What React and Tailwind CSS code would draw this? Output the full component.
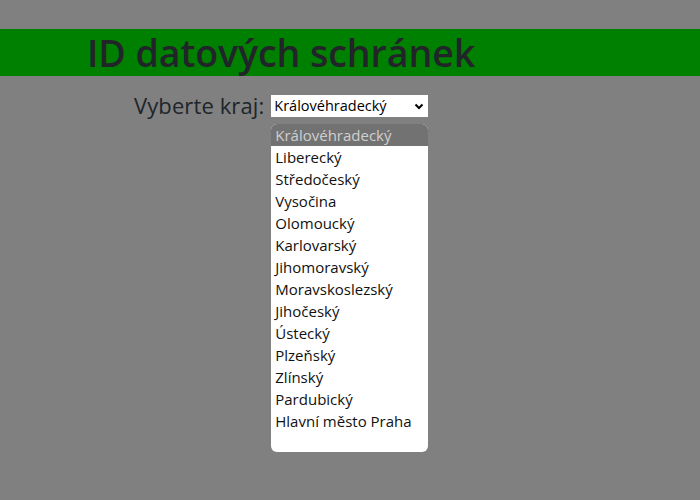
const kraje = [
  'Královéhradecký',
  'Liberecký',
  'Středočeský',
  'Vysočina',
  'Olomoucký',
  'Karlovarský',
  'Jihomoravský',
  'Moravskoslezský',
  'Jihočeský',
  'Ústecký',
  'Plzeňský',
  'Zlínský',
  'Pardubický',
  'Hlavní město Praha',
]

export default function App() {
  return (
    <div className="w-[700px] h-[500px] bg-[#808080] pt-[29px] text-[#212529]" style={{ fontFamily: '"Open Sans", sans-serif' }}>
      <div className="h-[47px] bg-[#008000] pl-[87px] flex items-center">
        <h1 className="text-[37.6px] font-semibold leading-none tracking-[-0.1px]">ID datových schránek</h1>
      </div>
      <div className="flex pl-[134px] mt-[19px]">
        <span className="text-[22px] leading-[22px] mt-[-1px] tracking-[0.1px]">Vyberte kraj:</span>
        <div className="ml-[7px] flex flex-col">
          <div className="w-[157px] h-[22px] bg-white flex items-center justify-between pl-[3px] pr-[4px] text-[14.5px] text-black">
            <span>Královéhradecký</span>
            <svg width="10" height="7" viewBox="0 0 10 7">
              <path d="M1.5 1.5 L5 5 L8.5 1.5" fill="none" stroke="#000" strokeWidth="2" />
            </svg>
          </div>
          <div className="mt-[7px] w-[157px] h-[328px] bg-white rounded-[6px] overflow-hidden">
            {kraje.map((k, i) => (
              <div
                key={k}
                className={
                  i === 0
                    ? 'h-[22px] px-[4px] text-[15px] leading-[22px] bg-[#727272] text-[#cfcfcf]'
                    : 'h-[22px] px-[4px] text-[15px] leading-[22px] text-[#111]'
                }
              >
                {k}
              </div>
            ))}
          </div>
        </div>
      </div>
    </div>
  )
}
